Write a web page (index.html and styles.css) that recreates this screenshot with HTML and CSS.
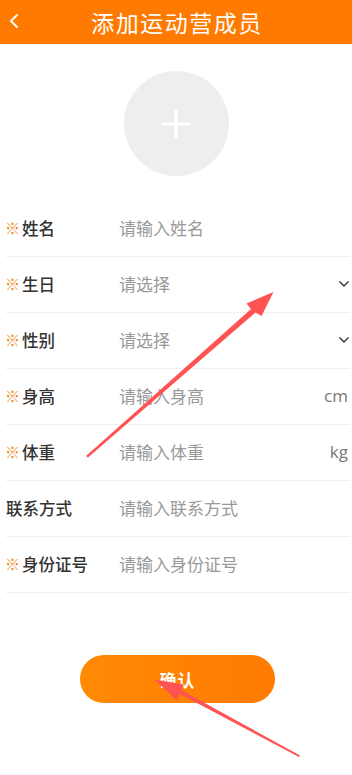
FILE: index.html
```html
<!DOCTYPE html>
<html lang="zh-CN">
<head>
  <meta charset="UTF-8">
  <meta name="viewport" content="width=device-width, initial-scale=1.0">
  <title>添加运动营成员</title>
  <link rel="stylesheet" href="styles.css">
</head>
<body>
  <div class="page">
    <header class="header">
      <svg class="back" width="10" height="16" viewBox="0 0 10 16">
        <polyline points="8,2 2,8 8,14" fill="none" stroke="#fff" stroke-width="2" stroke-linecap="round" stroke-linejoin="round"/>
      </svg>
      <h1 class="title">添加运动营成员</h1>
    </header>

    <div class="avatar-wrap">
      <div class="avatar">
        <svg width="30" height="30" viewBox="0 0 30 30">
          <path d="M15 2 V28 M2 15 H28" stroke="#fff" stroke-width="3.2" stroke-linecap="round"/>
        </svg>
      </div>
    </div>

    <div class="form">
      <div class="row">
        <span class="label"><i class="req">※</i>姓名</span>
        <span class="value">请输入姓名</span>
      </div>
      <div class="row">
        <span class="label"><i class="req">※</i>生日</span>
        <span class="value">请选择</span>
        <svg class="arrow-down" width="12" height="8" viewBox="0 0 12 8"><polyline points="1.5,1.5 6,6 10.5,1.5" fill="none" stroke="#333" stroke-width="1.4"/></svg>
      </div>
      <div class="row">
        <span class="label"><i class="req">※</i>性别</span>
        <span class="value">请选择</span>
        <svg class="arrow-down" width="12" height="8" viewBox="0 0 12 8"><polyline points="1.5,1.5 6,6 10.5,1.5" fill="none" stroke="#333" stroke-width="1.4"/></svg>
      </div>
      <div class="row">
        <span class="label"><i class="req">※</i>身高</span>
        <span class="value">请输入身高</span>
        <span class="unit">cm</span>
      </div>
      <div class="row">
        <span class="label"><i class="req">※</i>体重</span>
        <span class="value">请输入体重</span>
        <span class="unit">kg</span>
      </div>
      <div class="row">
        <span class="label">联系方式</span>
        <span class="value">请输入联系方式</span>
      </div>
      <div class="row">
        <span class="label"><i class="req">※</i>身份证号</span>
        <span class="value">请输入身份证号</span>
      </div>
    </div>

    <div class="actions">
      <button class="confirm">确认</button>
    </div>

    <!-- annotation arrows drawn over the screenshot -->
    <svg class="marks" width="352" height="775" viewBox="0 0 352 775">
      <polygon fill="#ff5252" points="86,456 251,309 246.5,303.5 273.5,292 261.5,316 255.5,312.5 88,457.5"/>
      <polygon fill="#ff5252" points="299,757 180,694 176.5,700.5 154.5,679.5 184,684.5 181,690 300,755.5"/>
    </svg>
  </div>
</body>
</html>
```

FILE: styles.css
```css
* {
  box-sizing: border-box;
}
body {
  margin: 0;
  background: #fff;
  font-family: "Noto Sans CJK SC", "Noto Sans", sans-serif;
}
.page {
  position: relative;
  width: 352px;
  height: 775px;
  overflow: hidden;
}
.header {
  height: 44px;
  background-color: #ff7a00;
  display: flex;
  align-items: center;
  justify-content: center;
  position: relative;
}
.back {
  position: absolute;
  left: 9px;
  top: 13px;
}
.title {
  margin: 0;
  color: #fff;
  font-size: 23px;
  font-weight: 400;
  letter-spacing: 1.5px;
  line-height: 44px;
  margin-left: 2px;
}
.avatar-wrap {
  display: flex;
  justify-content: center;
  padding-top: 27px;
  padding-bottom: 25px;
}
.avatar {
  width: 105px;
  height: 105px;
  border-radius: 50%;
  background-color: #eeeeee;
  display: flex;
  align-items: center;
  justify-content: center;
}
.form {
  padding: 0 2px 0 6px;
}
.row {
  height: 56px;
  display: flex;
  align-items: center;
  border-bottom: 1px solid #f0f0f0;
  padding-bottom: 2px;
}
.label {
  width: 113px;
  font-size: 16.5px;
  font-weight: 500;
  color: #333;
  display: flex;
  align-items: center;
}
.req {
  font-style: normal;
  color: #f08c1e;
  font-size: 15px;
  font-weight: 700;
  width: 17px;
  margin-left: -1px;
}
.value {
  flex: 1;
  font-size: 17px;
  color: #999;
}
.arrow-down {
  margin-right: 0;
}
.unit {
  font-family: "Open Sans", "Noto Sans", sans-serif;
  font-size: 17px;
  color: #777;
  margin-right: 2px;
}
.actions {
  display: flex;
  justify-content: center;
  padding-top: 62px;
}
.confirm {
  width: 195px;
  height: 48px;
  border: none;
  border-radius: 24px;
  background: linear-gradient(90deg, #ff8a04, #ff7a02);
  color: #fff;
  font-family: "Noto Sans CJK SC", sans-serif;
  font-size: 17px;
  font-weight: 700;
  letter-spacing: 1px;
  margin-left: 3px;
}
.marks {
  position: absolute;
  left: 0;
  top: 0;
  pointer-events: none;
}
```
